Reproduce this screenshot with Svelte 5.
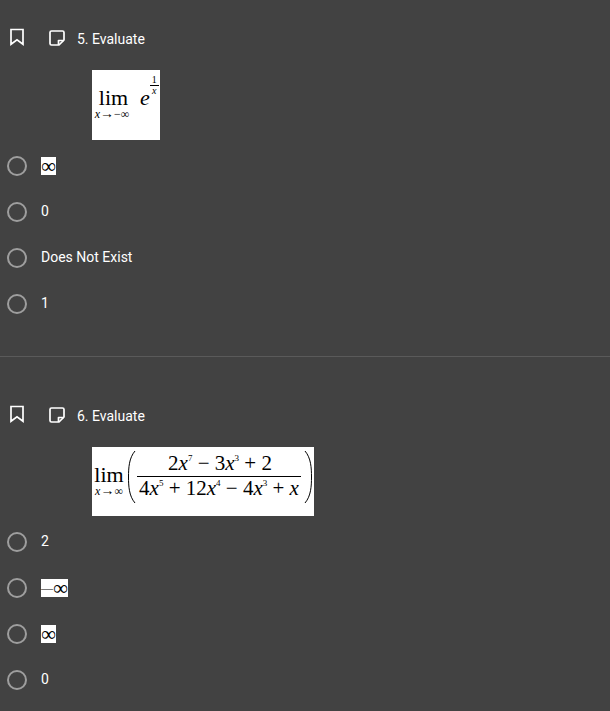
<script>
  const questions = [
    { title: '5. Evaluate', options: [{ inf: true }, { text: '0' }, { text: 'Does Not Exist' }, { text: '1' }], kind: 'exp' },
    { title: '6. Evaluate', options: [{ text: '2' }, { inf: true, neg: true }, { inf: true }, { text: '0' }], kind: 'frac' }
  ];
</script>

<main class="page">
  {#each questions as q, i}
    <section class="question" class:last={i === questions.length - 1}>
      <header class="head">
        <svg class="bookmark" width="16" height="18" viewBox="0 0 16 18" fill="none" stroke="#fff" stroke-width="1.7" aria-hidden="true">
          <path d="M2 1.500h12V16.200L8 11.800 2 16.200z" />
        </svg>
        <svg class="note" width="18" height="18" viewBox="0 0 18 18" fill="none" stroke="#fff" stroke-width="1.7" aria-hidden="true">
          <path d="M3.500 2h11A1.500 1.500 0 0 1 16 3.500V11l-5 5H3.500A1.500 1.500 0 0 1 2 14.500V3.500A1.500 1.500 0 0 1 3.500 2z" stroke-linejoin="round" />
          <path d="M10.500 16V11.500H16" stroke-linejoin="round" />
        </svg>
        <span class="title">{q.title}</span>
      </header>

      {#if q.kind === 'exp'}
        <div class="math exp">
          <div class="limit">
            <span class="lim">lim</span>
            <span class="under"><i>x</i><span class="arrow">→</span>−∞</span>
          </div>
          <span class="base">e</span>
          <span class="tiny-frac"><span>1</span><i>x</i></span>
        </div>
      {:else}
        <div class="math frac">
          <div class="limit">
            <span class="lim">lim</span>
            <span class="under"><i>x</i><span class="arrow">→</span>∞</span>
          </div>
          <svg class="paren" width="9" height="54" viewBox="0 0 9 54" fill="none" stroke="#000" aria-hidden="true"><path d="M8 1C2 8 1.500 18 1.500 27S2 46 8 53" /></svg>
          <div class="fraction">
            <span class="num">2<i>x</i><sup>7</sup> − 3<i>x</i><sup>3</sup> + 2</span>
            <span class="den">4<i>x</i><sup>5</sup> + 12<i>x</i><sup>4</sup> − 4<i>x</i><sup>3</sup> + <i>x</i></span>
          </div>
          <svg class="paren" width="9" height="54" viewBox="0 0 9 54" fill="none" stroke="#000" aria-hidden="true"><path d="M1 1C7 8 7.500 18 7.500 27S7 46 1 53" /></svg>
        </div>
      {/if}

      <ul class="options">
        {#each q.options as o}
          <li class="option">
            <span class="radio"></span>
            {#if o.inf}
              <span class="chip" class:neg={o.neg}>{#if o.neg}<span class="dash">—</span>{/if}<span class="inf">∞</span></span>
            {:else}
              <span class="label">{o.text}</span>
            {/if}
          </li>
        {/each}
      </ul>
    </section>
  {/each}
</main>

<style>
  :global(body) {
    margin: 0;
    background: #424242;
  }
  .page {
    width: 610px;
    height: 711px;
    overflow: hidden;
    background: #424242;
    color: #fff;
    font-family: Roboto, sans-serif;
    font-size: 14px;
  }
  .question {
    padding-top: 26px;
    padding-bottom: 29px;
    border-bottom: 1px solid #5a5a5a;
  }
  .question.last {
    border-bottom: 0;
    padding-top: 46px;
  }
  .head {
    display: flex;
    align-items: center;
    height: 24px;
    padding-left: 9px;
  }
  .bookmark {
    margin-top: -2px;
  }
  .note {
    margin-left: 23px;
  }
  .title {
    margin-left: 11px;
    padding-top: 2px;
    line-height: 24px;
  }
  .math {
    display: flex;
    margin: 20px 0 0 92px;
    background: #fff;
    color: #000;
    font-family: "Liberation Serif", serif;
    box-sizing: border-box;
  }
  .exp {
    width: 68px;
    height: 70px;
    padding: 17px 0 0 1px;
  }
  .frac {
    width: 222px;
    height: 69px;
    padding: 3px 0 0 2px;
    align-items: flex-start;
  }
  .limit {
    display: flex;
    flex-direction: column;
    align-items: center;
    width: 38px;
  }
  .exp .lim {
    padding-left: 3px;
  }
  .frac .limit {
    width: 30px;
    padding-top: 14px;
  }
  .lim {
    font-size: 22px;
    line-height: 21px;
  }
  .under {
    font-size: 12px;
    line-height: 12px;
    white-space: nowrap;
  }
  .arrow {
    font-size: 14px;
  }
  .base {
    font-size: 22px;
    font-style: italic;
    line-height: 22px;
    margin-left: 9px;
  }
  .tiny-frac {
    display: flex;
    flex-direction: column;
    align-items: center;
    width: 9px;
    margin: -12px 0 0 0;
    font-size: 10px;
    line-height: 9px;
    height: 20px;
  }
  .tiny-frac span {
    border-bottom: 1px solid #000;
    width: 100%;
    text-align: center;
    height: 10px;
  }
  .paren {
    flex: none;
    margin-left: 3px;
  }
  .fraction {
    display: flex;
    flex-direction: column;
    align-items: center;
    width: 164px;
    margin: 2px 0 0 1px;
    font-size: 21px;
    line-height: 22px;
  }
  .num {
    display: block;
    width: 100%;
    padding-left: 2px;
    box-sizing: border-box;
    text-align: center;
    border-bottom: 1px solid #000;
    height: 25px;
    white-space: nowrap;
  }
  .den {
    white-space: nowrap;
  }
  sup {
    font-size: 9px;
    line-height: 0;
    vertical-align: 9px;
  }
  .options {
    list-style: none;
    margin: 3px 0 0;
    padding: 0;
  }
  .option {
    display: flex;
    align-items: center;
    height: 46px;
    padding-left: 7px;
  }
  .radio {
    flex: none;
    width: 16px;
    height: 16px;
    border: 2px solid #9e9e9e;
    border-radius: 50%;
  }
  .label {
    margin-left: 14px;
    line-height: 44px;
    height: 46px;
  }
  .chip {
    display: flex;
    align-items: center;
    justify-content: center;
    margin-left: 14px;
    width: 15px;
    height: 18px;
    background: #fff;
    color: #000;
    font-family: "Liberation Serif", serif;
    line-height: 18px;
    white-space: nowrap;
  }
  .chip.neg {
    width: 27px;
    justify-content: flex-start;
  }
  .inf {
    font-size: 21px;
  }
  .dash {
    font-size: 12px;
  }
</style>
